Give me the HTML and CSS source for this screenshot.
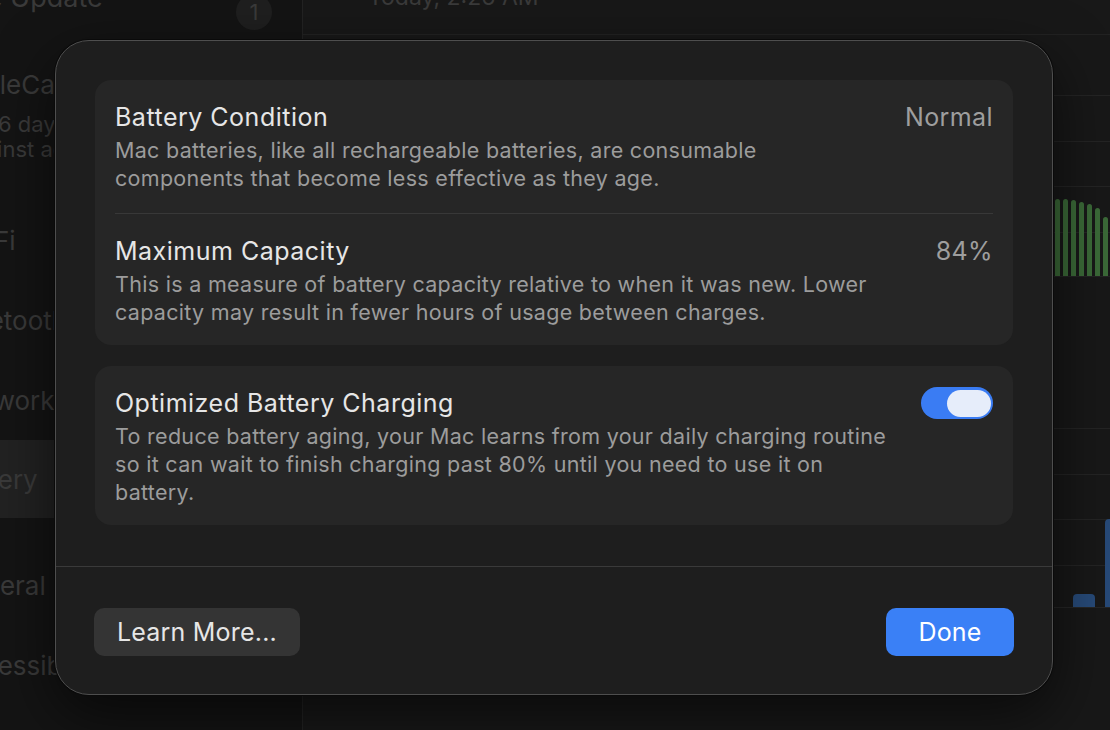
FILE: index.html
```html
<!DOCTYPE html>
<html lang="en">
<head>
<meta charset="utf-8">
<title>Battery Health</title>
<link rel="stylesheet" href="styles.css">
</head>
<body>
<div class="window">
  <aside class="sidebar">
    <div class="side-item update"><span class="label">Software Update</span><span class="badge">1</span></div>
    <div class="side-item care">
      <span class="label">AppleCare+</span>
      <span class="sub sub-a">Expires in 16 days</span>
      <span class="sub sub-b">Protect against accidents</span>
    </div>
    <div class="side-item"><span class="label">Wi-Fi</span></div>
    <div class="side-item"><span class="label">Bluetooth</span></div>
    <div class="side-item"><span class="label">Network</span></div>
    <div class="side-item selected"><span class="label">Battery</span></div>
    <div class="side-gap"></div>
    <div class="side-item"><span class="label">General</span></div>
    <div class="side-item"><span class="label">Accessibility</span></div>
  </aside>
  <main class="main">
    <div class="main-head"><span class="stamp">Today, 2:26 AM</span></div>
    <div class="chart level">
      <div class="grid"><i></i><i></i><i></i><i></i></div>
      <div class="bars green">
        <b style="height:77px"></b><b style="height:77px"></b><b style="height:76px"></b><b style="height:74px"></b><b style="height:72px"></b><b style="height:68px"></b><b style="height:59px"></b><b style="height:50px"></b>
      </div>
    </div>
    <div class="chart usage">
      <div class="grid"><i></i><i></i><i></i><i></i></div>
      <div class="bars blue">
        <b style="height:13px"></b><b style="height:88px"></b>
      </div>
    </div>
  </main>
</div>

<div class="sheet">
  <div class="sheet-body">
    <section class="card">
      <div class="row">
        <div class="text">
          <div class="title">Battery Condition</div>
          <div class="desc">Mac batteries, like all rechargeable batteries, are consumable<br>components that become less effective as they age.</div>
        </div>
        <div class="value">Normal</div>
      </div>
      <div class="row">
        <div class="text">
          <div class="title">Maximum Capacity</div>
          <div class="desc">This is a measure of battery capacity relative to when it was new. Lower<br>capacity may result in fewer hours of usage between charges.</div>
        </div>
        <div class="value">84%</div>
      </div>
    </section>
    <section class="card">
      <div class="row">
        <div class="text">
          <div class="title">Optimized Battery Charging</div>
          <div class="desc">To reduce battery aging, your Mac learns from your daily charging routine<br>so it can wait to finish charging past 80% until you need to use it on<br>battery.</div>
        </div>
        <div class="toggle on"><span class="knob"></span></div>
      </div>
    </section>
  </div>
  <footer class="sheet-foot">
    <button class="btn secondary">Learn More...</button>
    <button class="btn primary">Done</button>
  </footer>
</div>
</body>
</html>
```

FILE: styles.css
```css
* { box-sizing: border-box; }
html, body {
  margin: 0;
  padding: 0;
  width: 1110px;
  height: 730px;
  overflow: hidden;
  background: #151515;
  font-family: Inter, "Noto Sans", "Liberation Sans", sans-serif;
}

/* ---------- dimmed background window ---------- */
.window {
  display: flex;
  height: 730px;
  margin-left: -60px;
}
.sidebar {
  width: 363px;
  flex: none;
  background: #141414;
  border-right: 1px solid #232323;
  margin-top: -18px;
  padding: 0 12px 0 0;
  display: flex;
  flex-direction: column;
  color: #3a3a3a;
  font-size: 26px;
}
.side-item {
  display: flex;
  align-items: center;
  height: 80px;
  padding-left: 10px;
  border-radius: 10px;
  flex: none;
}
.side-item.update {
  height: 60px;
  padding-left: 0;
  margin-left: -52px;
}
.side-item.update .label {
  flex: 1;
  margin-bottom: 30px;
  font-size: 27px;
}
.badge {
  width: 36px;
  height: 36px;
  border-radius: 50%;
  background: #1f1f1f;
  color: #3a3a3a;
  font-size: 22px;
  display: flex;
  align-items: center;
  justify-content: center;
  margin-right: 18px;
}
.side-item.care {
  flex-direction: column;
  align-items: flex-start;
  justify-content: flex-start;
  height: 158px;
  padding-top: 26px;
}
.care .label { line-height: 34px; }
.care .sub { font-size: 22px; line-height: 25px; }
.care .sub-a { margin-top: 10px; margin-left: -68px; }
.care .sub-b { margin-left: -72px; }
.side-item.selected { background: #222222; height: 78px; }
.side-gap { height: 27px; flex: none; }

.main {
  flex: 1;
  background: #181818;
  overflow: hidden;
}
.main-head {
  height: 35px;
  border-bottom: 1px solid #222222;
  padding-left: 65px;
  color: #3a3a3a;
  font-size: 23px;
  line-height: 20px;
  overflow: hidden;
}
.stamp { display: block; margin-top: -13px; }
.chart {
  position: relative;
  margin-left: 65px;
}
.chart .grid {
  display: flex;
  flex-direction: column;
}
.chart .grid i {
  display: block;
  height: 45.5px;
  border-top: 1px solid #242424;
}
.chart.level { margin-top: 60px; height: 182px; border-bottom: 1px solid #242424; }
.chart.usage { margin-top: 151px; height: 180px; border-bottom: 1px solid #262626; }
.bars {
  position: absolute;
  bottom: 0;
  left: 687px;
  display: flex;
  align-items: flex-end;
}
.bars.green { gap: 3px; }
.bars.green b {
  width: 5px;
  background: #3b6a38;
  border-radius: 3px 3px 0 0;
}
.bars.blue { left: 705px; gap: 10px; }
.bars.blue b {
  width: 22px;
  background: #274a78;
  border-radius: 4px 4px 0 0;
}

/* ---------- sheet ---------- */
.sheet {
  position: absolute;
  left: 55px;
  top: 40px;
  width: 998px;
  height: 655px;
  background: #1e1e1e;
  border: 1px solid #4e4e4e;
  border-radius: 34px;
  box-shadow: 0 0 0 1px #0a0a0a, 0 20px 60px rgba(0,0,0,0.6);
  display: flex;
  flex-direction: column;
  color: #e4e4e4;
}
.sheet-body {
  padding: 39px 39px 0;
  display: flex;
  flex-direction: column;
  gap: 21px;
  flex: 1;
}
.card {
  background: #262626;
  border-radius: 16px;
  padding: 0 20px;
}
.row {
  display: flex;
  align-items: flex-start;
  justify-content: space-between;
  padding: 22px 0 19px;
}
.row + .row { border-top: 1px solid #383838; }
.card .row:first-child:not(:last-child) { padding-bottom: 21px; }
.title {
  font-size: 25px;
  line-height: 30px;
  color: #e6e6e6;
  letter-spacing: 0.5px;
}
.desc {
  margin-top: 4px;
  font-size: 21.5px;
  line-height: 28px;
  color: #9c9c9c;
  letter-spacing: 0.3px;
  white-space: nowrap;
}
.value {
  font-size: 25px;
  line-height: 30px;
  color: #9e9e9e;
  letter-spacing: 0.4px;
}
.toggle {
  flex: none;
  width: 72px;
  height: 32px;
  border-radius: 16px;
  background: #3a7cf3;
  padding: 2px;
  display: flex;
  justify-content: flex-end;
  align-items: center;
  margin-top: -1px;
}
.knob {
  width: 44px;
  height: 27px;
  border-radius: 14px;
  background: #e6edfa;
}
.sheet-foot {
  border-top: 1px solid #3a3a3a;
  padding: 41px 38px 38px;
  display: flex;
  justify-content: space-between;
}
.btn {
  height: 48px;
  border: none;
  border-radius: 10px;
  font-family: inherit;
  font-size: 25px;
  letter-spacing: 0.2px;
  padding: 0 10px;
}
.btn.secondary {
  width: 206px;
  background: #343434;
  color: #e6e6e6;
}
.btn.primary {
  width: 128px;
  background: #3a80f6;
  color: #ffffff;
}
```
